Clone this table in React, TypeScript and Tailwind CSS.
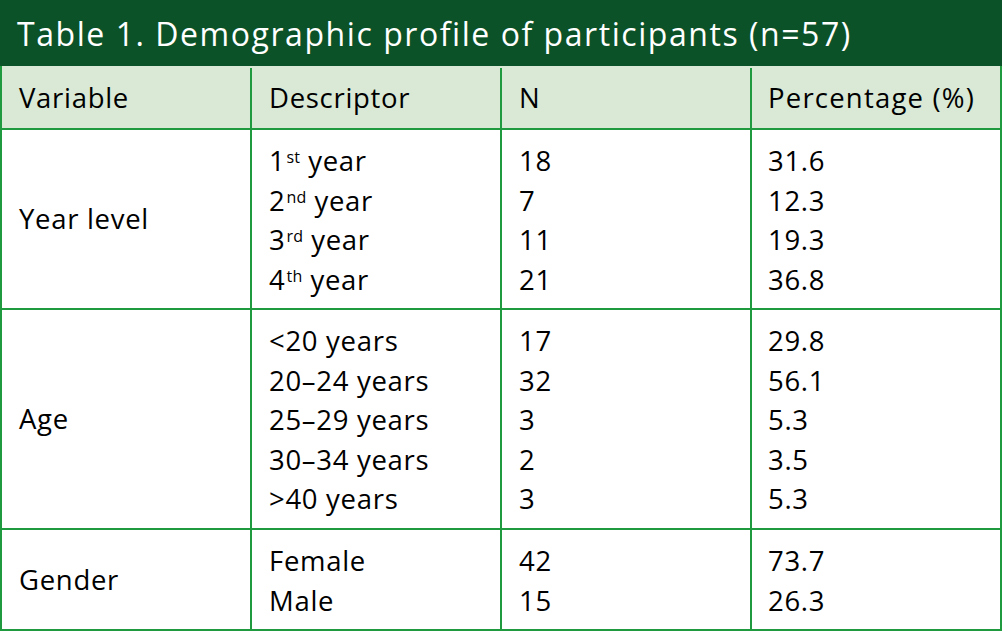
const font = { fontFamily: '"Open Sans", "Noto Sans", sans-serif' };

type Line = { text: string; sup?: string; rest?: string };

const groups: { variable: string; height: string; lines: Line[]; n: string[]; pct: string[] }[] = [
  {
    variable: 'Year level',
    height: 'h-[180px]',
    lines: [
      { text: '1', sup: 'st', rest: ' year' },
      { text: '2', sup: 'nd', rest: ' year' },
      { text: '3', sup: 'rd', rest: ' year' },
      { text: '4', sup: 'th', rest: ' year' },
    ],
    n: ['18', '7', '11', '21'],
    pct: ['31.6', '12.3', '19.3', '36.8'],
  },
  {
    variable: 'Age',
    height: 'h-[220px]',
    lines: [
      { text: '<20 years' },
      { text: '20–24 years' },
      { text: '25–29 years' },
      { text: '30–34 years' },
      { text: '>40 years' },
    ],
    n: ['17', '32', '3', '2', '3'],
    pct: ['29.8', '56.1', '5.3', '3.5', '5.3'],
  },
  {
    variable: 'Gender',
    height: 'h-[99px]',
    lines: [{ text: 'Female' }, { text: 'Male' }],
    n: ['42', '15'],
    pct: ['73.7', '26.3'],
  },
];

const cell = 'flex flex-col justify-center pl-[17px] border-r-2 border-[#1f9a3e]';
const lastCell = 'flex flex-col justify-center pl-[16px]';

export default function App() {
  return (
    <div className="w-[1002px] h-[631px] bg-white text-black overflow-hidden" style={font}>
      <div className="h-[66px] bg-[#0b5228] text-white text-[32px] pl-[17px] flex items-center pt-[1px] tracking-[1.55px]">
        Table 1. Demographic profile of participants (n=57)
      </div>
      <div className="border-l-2 border-r-2 border-b-2 border-[#1f9a3e]">
        <div className="grid grid-cols-[250px_250px_250px_1fr] h-[64px] bg-[#d9e9d6] border-b-2 border-[#1f9a3e] text-[27.5px] tracking-[0.7px] pt-[2px]">
          <div className={cell}>Variable</div>
          <div className={cell}>Descriptor</div>
          <div className={cell}>N</div>
          <div className={`${lastCell} tracking-[1.2px]`}>Percentage (%)</div>
        </div>
        {groups.map((g, gi) => (
          <div
            key={g.variable}
            className={`grid grid-cols-[250px_250px_250px_1fr] ${g.height} text-[27.5px] tracking-[0.7px] leading-[39.5px] ${gi < groups.length - 1 ? 'border-b-2 border-[#1f9a3e]' : ''}`}
          >
            <div className={cell}>{g.variable}</div>
            <div className={`${cell} pt-[2px]`}>
              {g.lines.map((l) => (
                <div key={l.text + (l.sup || '')}>
                  {l.text}
                  {l.sup && <sup className="text-[16px] ml-[1px] tracking-[0.3px]">{l.sup}</sup>}
                  {l.rest}
                </div>
              ))}
            </div>
            <div className={`${cell} pt-[2px]`}>
              {g.n.map((v, i) => (
                <div key={i}>{v}</div>
              ))}
            </div>
            <div className={`${lastCell} pt-[2px]`}>
              {g.pct.map((v, i) => (
                <div key={i}>{v}</div>
              ))}
            </div>
          </div>
        ))}
      </div>
    </div>
  );
}
